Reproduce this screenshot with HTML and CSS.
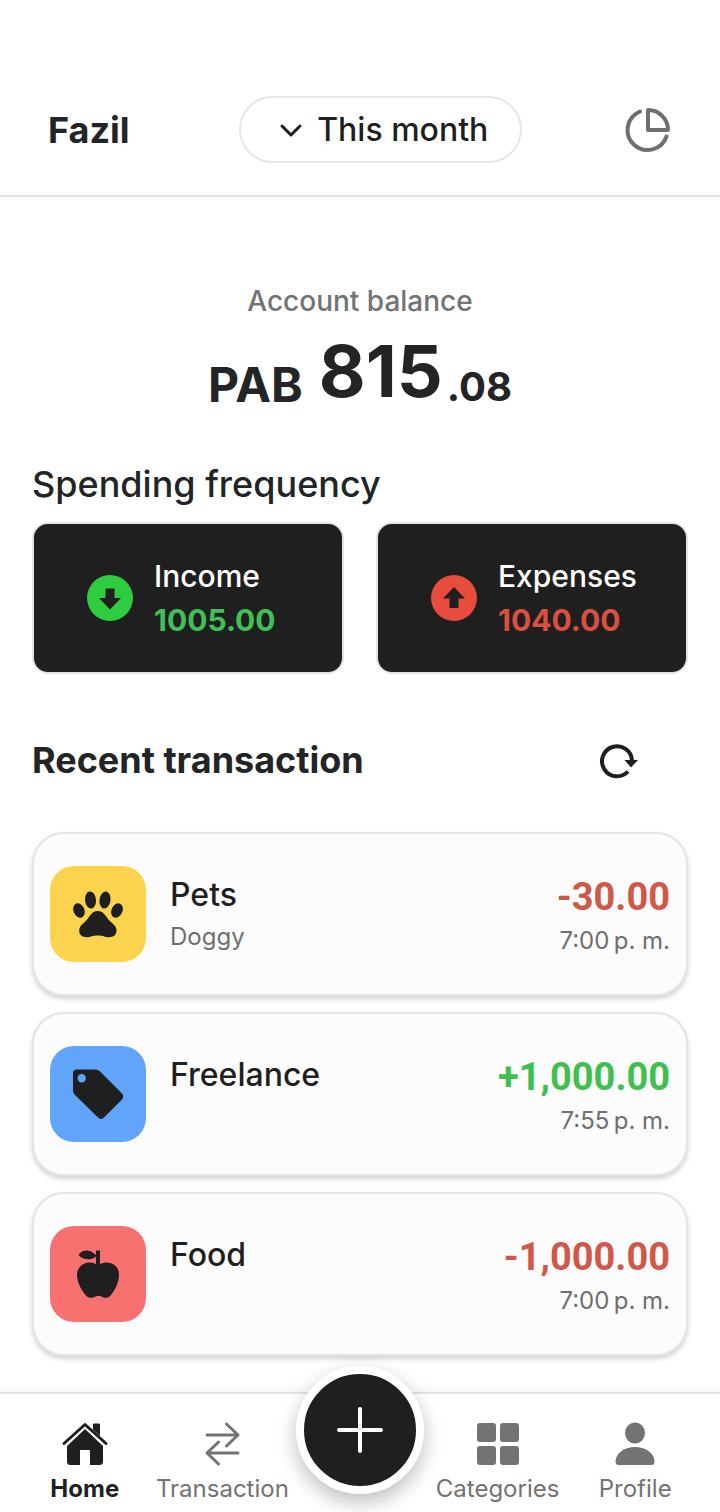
FILE: index.html
```html
<!DOCTYPE html>
<html lang="en">
<head>
<meta charset="utf-8">
<meta name="viewport" content="width=device-width, initial-scale=1">
<title>Account balance</title>
<link rel="stylesheet" href="styles.css">
</head>
<body>
<div class="app">
  <header class="topbar">
    <h1 class="user">Fazil</h1>
    <button class="period" type="button">
      <svg class="chevron" viewBox="0 0 24 24" aria-hidden="true"><path d="M3 8l9 9 9-9"/></svg>
      This month
    </button>
    <button class="stats" type="button" aria-label="Statistics">
      <svg class="pie" viewBox="0 0 48 48" aria-hidden="true"><path d="M16 5.500A20 20 0 1 0 42.500 30.500M24 4v20h20A20 20 0 0 0 24 4z"/></svg>
    </button>
  </header>

  <main class="content">
    <section class="balance">
      <p class="balance-label">Account balance</p>
      <p class="balance-value"><span class="currency">PAB</span><span class="whole">815</span><span class="cents">.08</span></p>
    </section>

    <section>
      <h2 class="spending-title">Spending frequency</h2>
      <div class="totals">
        <div class="total">
          <svg class="total-icon" viewBox="0 0 56 56" aria-hidden="true"><circle cx="28" cy="28" r="23" fill="#2ecc40"/><path fill="#1f1f1f" d="M23.500 18.500h9V28h6.500L28 39.500 17 28h6.500z"/></svg>
          <div>
            <p class="total-label">Income</p>
            <p class="total-value income">1005.00</p>
          </div>
        </div>
        <div class="total">
          <svg class="total-icon" viewBox="0 0 56 56" aria-hidden="true"><circle cx="28" cy="28" r="23" fill="#e74c3c"/><path fill="#1f1f1f" d="M23.500 38h9v-9.500h6.500L28 17 17 28.500h6.500z"/></svg>
          <div>
            <p class="total-label">Expenses</p>
            <p class="total-value expense">1040.00</p>
          </div>
        </div>
      </div>
    </section>

    <section>
      <div class="recent-head">
        <h2 class="recent-title">Recent transaction</h2>
        <button class="refresh" type="button" aria-label="Refresh">
          <svg class="refresh-icon" viewBox="0 0 40 40" aria-hidden="true"><path class="ring" d="M30 31.500A15 15 0 1 1 34 20.500"/><path class="tip" d="M26.500 20h13.500L33 27.500z"/></svg>
        </button>
      </div>
      <ul class="list">
        <li class="item">
          <span class="tile yellow"><svg class="tile-icon" viewBox="0 0 56 56" aria-hidden="true"><ellipse cx="9" cy="24.500" rx="5.500" ry="7.500" transform="rotate(-22 9 24.500)"/><ellipse cx="20.500" cy="14" rx="5.500" ry="8.500" transform="rotate(-6 20.500 14)"/><ellipse cx="35" cy="14" rx="5.500" ry="8.500" transform="rotate(8 35 14)"/><ellipse cx="47" cy="24.500" rx="5.500" ry="7.500" transform="rotate(25 47 24.500)"/><path d="M27.700 25c3.300 0 6 1.800 8.300 5.200 2 3 3.500 4.600 6.300 7 3 2.500 4.200 4.400 4.200 7.300 0 4.500-3 6.700-7.500 6.700-4.200 0-6-1.700-11.300-1.700S20.500 51.200 16.500 51.200c-4.500 0-7.300-2.200-7.300-6.700 0-2.900 1.200-4.800 4.200-7.300 2.800-2.400 4.100-4 6.100-7 2.300-3.400 4.900-5.200 8.200-5.200z"/></svg></span>
          <div class="info"><p class="name">Pets</p><p class="note">Doggy</p></div>
          <div class="figures"><p class="amount expense-amount">-30.00</p><p class="time">7:00&#8239;p.&nbsp;m.</p></div>
        </li>
        <li class="item">
          <span class="tile blue"><svg class="tile-icon" viewBox="0 0 56 56" aria-hidden="true"><path fill-rule="evenodd" d="M7 3.500h18.500q2.500 0 4.500 2L52 27.500q2.500 3 0 6L33.500 52q-2.500 2.200-5 0L5 29q-2-2-2-4.500V7.500q0-4 4-4zM11.700 8a4.200 4.200 0 1 0 0 8.400 4.200 4.200 0 0 0 0-8.400z"/></svg></span>
          <div class="info"><p class="name">Freelance</p></div>
          <div class="figures"><p class="amount income-amount">+1,000.00</p><p class="time">7:55&#8239;p.&nbsp;m.</p></div>
        </li>
        <li class="item">
          <span class="tile red"><svg class="tile-icon" viewBox="0 0 56 56" aria-hidden="true"><path d="M8.500 9c4-6.500 12-5 15.500-1.500l2 1.500V5q0-.5.500-.5H30V18c3-1.500 7-2.200 11-.8 5.500 1.800 8 6.300 8 11.300 0 8-4.500 17-9.500 22-2.500 2.200-6 1.200-7.500.2-2-1.200-4.500-1.200-7 0-2 1-5.500 1.800-8-.2-5-5-10-14-10-22 0-5 3-9.500 8-11.300 4-1.300 8-.7 11 .8V10.500c-4 4-12.500 4-17.500-1.500z"/></svg></span>
          <div class="info"><p class="name">Food</p></div>
          <div class="figures"><p class="amount expense-amount">-1,000.00</p><p class="time">7:00&#8239;p.&nbsp;m.</p></div>
        </li>
      </ul>
    </section>
  </main>

  <nav class="tabs">
    <a class="tab active" href="#home">
      <svg class="tab-icon" viewBox="0 0 48 48" aria-hidden="true"><path class="fill" d="M6 27L24 10l18 17v15.500q0 3.500-3.500 3.500H29V31H19v15H9.500Q6 46 6 42.500zM32 5.500q0-1 1-1h5q1 0 1 1V17l-7-6.500z"/><path class="roof" d="M3 24.500L24 5.500l21 19"/></svg>
      Home
    </a>
    <a class="tab" href="#transaction">
      <svg class="tab-icon" viewBox="0 0 48 48" aria-hidden="true"><path class="line" d="M9 16h31M28.500 5L40 16 28.500 27M40 34H9M20.500 23L9 34l11.500 11"/></svg>
      Transaction
    </a>
    <div class="fab-slot">
      <button class="fab" type="button" aria-label="Add transaction">
        <svg class="plus" viewBox="0 0 48 48" aria-hidden="true"><path d="M24 3v42M3 24h42"/></svg>
      </button>
    </div>
    <a class="tab" href="#categories">
      <svg class="tab-icon" viewBox="0 0 48 48" aria-hidden="true"><path class="fill" d="M6 4h13q3 0 3 3v13q0 3-3 3H6q-3 0-3-3V7q0-3 3-3zM29 4h13q3 0 3 3v13q0 3-3 3H29q-3 0-3-3V7q0-3 3-3zM6 27h13q3 0 3 3v13q0 3-3 3H6q-3 0-3-3V30q0-3 3-3zM29 27h13q3 0 3 3v13q0 3-3 3H29q-3 0-3-3V30q0-3 3-3z"/></svg>
      Categories
    </a>
    <a class="tab" href="#profile">
      <svg class="tab-icon" viewBox="0 0 48 48" aria-hidden="true"><ellipse class="fill" cx="24" cy="14" rx="10" ry="10.500"/><path class="fill" d="M4.500 42.500C4.500 34 14 28 24 28s19.500 6 19.500 14.500Q43.500 46 40 46H8q-3.500 0-3.500-3.500z"/></svg>
      Profile
    </a>
  </nav>
</div>
</body>
</html>
```
FILE: styles.css
```css
* { box-sizing: border-box; }

body {
  margin: 0;
  background: #fff;
  color: #222426;
  font-family: Inter, "Liberation Sans", sans-serif;
}

h1, h2, p, ul { margin: 0; padding: 0; font-weight: inherit; }
button { font: inherit; color: inherit; background: none; border: 0; padding: 0; cursor: pointer; }
svg { display: block; flex: none; }

.app { min-height: 100vh; display: flex; flex-direction: column; }

.topbar {
  display: flex;
  justify-content: space-between;
  align-items: center;
  padding: 96px 48px 32px;
  border-bottom: 2px solid #e4e4e4;
}
.user { padding-right: 8px; font-size: 36px; line-height: 44px; font-weight: 700; }
.period {
  display: flex;
  align-items: center;
  gap: 14px;
  height: 67px;
  padding: 0 32px 0 38px;
  border: 2px solid #e6e6e6;
  border-radius: 34px;
  font-size: 32px;
  font-weight: 500;
  color: #1f1f1f;
}
.chevron { width: 24px; height: 24px; fill: none; stroke: currentColor; stroke-width: 3; stroke-linecap: round; stroke-linejoin: round; }
.stats { color: #6f6f6f; }
.pie { width: 48px; height: 48px; fill: none; stroke: currentColor; stroke-width: 4; stroke-linecap: round; stroke-linejoin: round; }

.content { flex: 1; padding: 88px 32px 32px; }

.balance { text-align: center; }
.balance-label { font-size: 28px; line-height: 32px; font-weight: 500; color: #737373; }
.balance-value { display: flex; justify-content: center; align-items: flex-end; padding-top: 10px; font-weight: 700; }
.currency { font-size: 48px; line-height: 60px; margin-right: 16px; }
.whole { font-size: 72px; line-height: 88px; }
.cents { font-size: 40px; line-height: 56px; margin-left: 4px; }

.spending-title { margin-top: 45px; font-size: 36px; line-height: 48px; font-weight: 500; }
.totals { display: grid; grid-template-columns: 1fr 1fr; gap: 32px; margin-top: 14px; }
.total {
  display: flex;
  align-items: center;
  gap: 16px;
  padding: 30px 0 30px 48px;
  background: #1f1f1f;
  border: 2px solid #e4e4e4;
  border-radius: 16px;
}
.total-icon { width: 56px; height: 56px; }
.total-label { font-size: 30px; line-height: 44px; font-weight: 500; color: #fff; }
.total-value { font-size: 30px; line-height: 44px; font-weight: 700; }
.income { color: #40c057; }
.expense { color: #d95040; }

.recent-head { display: flex; justify-content: space-between; align-items: center; padding: 62px 50px 48px 0; }
.recent-title { font-size: 36px; line-height: 48px; font-weight: 700; }
.refresh { color: #1f1f1f; }
.refresh-icon { width: 40px; height: 40px; }
.ring { fill: none; stroke: currentColor; stroke-width: 4; }
.tip { fill: currentColor; }

.list { list-style: none; display: grid; gap: 16px; }
.item {
  display: flex;
  gap: 24px;
  padding: 32px 16px;
  background: #fcfcfc;
  border: 2px solid #e4e4e4;
  border-radius: 32px;
  box-shadow: 0 3px 5px rgba(0, 0, 0, .18);
}
.tile { display: grid; place-items: center; width: 96px; height: 96px; border-radius: 24px; }
.yellow { background: #fcd34d; }
.blue { background: #60a5fa; }
.red { background: #f87171; }
.tile-icon { width: 56px; height: 56px; fill: #1f1f1f; }
.info { flex: 1; padding-top: 8px; }
.name { font-size: 32px; line-height: 42px; font-weight: 500; color: #1f1f1f; }
.note, .time { font-size: 24px; line-height: 42px; color: #6f6f6f; }
.figures { padding-top: 8px; text-align: right; }
.amount { font-family: Roboto, Inter, sans-serif; font-size: 38px; line-height: 46px; font-weight: 700; }
.income-amount { color: #3fbf50; }
.expense-amount { color: #cf5848; }

.tabs {
  display: grid;
  grid-template-columns: repeat(5, 1fr);
  height: 120px;
  padding: 0 16px;
  background: #fff;
  border-top: 2px solid #e2e2e2;
  box-shadow: 0 -1px 12px rgba(0, 0, 0, .05);
}
.tab {
  display: flex;
  flex-direction: column;
  align-items: center;
  gap: 4px;
  padding-top: 25px;
  font-size: 24px;
  line-height: 36px;
  color: #737373;
  text-decoration: none;
}
.active { color: #1f1f1f; font-weight: 700; }
.tab-icon { width: 48px; height: 48px; }
.fill { fill: currentColor; }
.roof { fill: none; stroke: currentColor; stroke-width: 3; stroke-linecap: round; stroke-linejoin: round; }
.line { fill: none; stroke: currentColor; stroke-width: 3; stroke-linecap: round; stroke-linejoin: round; }

.fab-slot { position: relative; }
.fab {
  position: absolute;
  top: -28px;
  left: 50%;
  margin-left: -64px;
  display: grid;
  place-items: center;
  width: 128px;
  height: 128px;
  border: 8px solid #fff;
  border-radius: 50%;
  background: #1f1f1f;
  color: #fff;
  box-shadow: 0 8px 20px rgba(0, 0, 0, .26);
}
.plus { width: 48px; height: 48px; fill: none; stroke: currentColor; stroke-width: 4; stroke-linecap: round; }
```
